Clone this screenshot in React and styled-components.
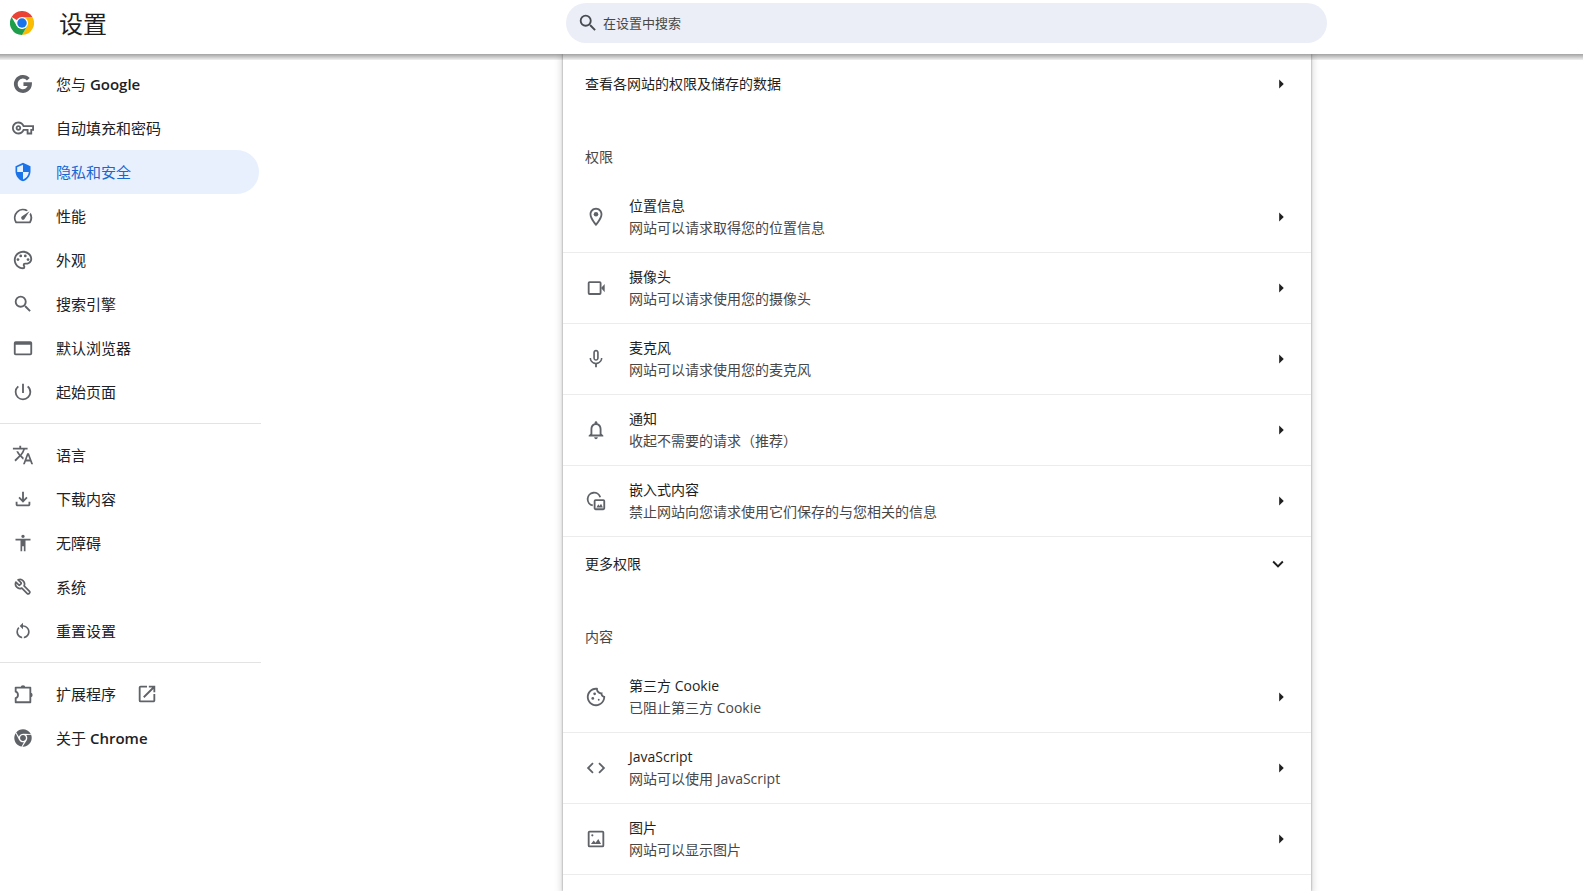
import React, { useState } from 'react';
import styled, { createGlobalStyle } from 'styled-components';
import { FaChrome } from 'react-icons/fa';
import {
    MdAccessibility,
    MdCode,
    MdNotificationsNone,
    MdOpenInNew,
    MdOutlineCookie,
    MdOutlineFileDownload,
    MdOutlineLocationOn,
    MdOutlinePalette,
    MdOutlineSpeed,
    MdOutlineVpnKey,
    MdMicNone,
    MdPowerSettingsNew,
    MdRestartAlt,
    MdSearch,
    MdSecurity,
    MdTranslate,
} from 'react-icons/md';

const ChromeLogo = () => (
    <svg width="24" height="24" viewBox="0 0 48 48" aria-hidden="true">
        <path d="M24 24 3.2 12A24 24 0 0 1 44.8 12H24z" fill="#ea4335" />
        <path d="M24 12h20.8A24 24 0 0 1 24 48l10.4-18z" fill="#fbbc04" />
        <path d="M3.2 12 13.6 30 24 36l10.4-6L24 48A24 24 0 0 1 3.2 12z" fill="#1e9e4a" />
        <circle cx="24" cy="24" r="12" fill="#fff" />
        <circle cx="24" cy="24" r="9.5" fill="#1a73e8" />
    </svg>
);

const GoogleIcon = () => (
    <svg viewBox="0 0 24 24" fill="none" stroke="currentColor" strokeWidth="4" aria-hidden="true">
        <path d="M17.800 6.800A7.800 7.800 0 1 0 19.700 12.200H12.500" />
    </svg>
);

const BrowserIcon = () => (
    <svg viewBox="0 0 24 24" fill="currentColor" aria-hidden="true">
        <path fillRule="evenodd" d="M4 4.5h16a2 2 0 0 1 2 2V18a2 2 0 0 1-2 2H4a2 2 0 0 1-2-2V6.500a2 2 0 0 1 2-2zM4 8.500V18h16V8.500z" />
    </svg>
);

const WrenchIcon = () => (
    <svg viewBox="0 0 24 24" fill="none" stroke="currentColor" strokeWidth="2.3" strokeLinejoin="round" aria-hidden="true">
        <g transform="translate(24 0) scale(-1 1)">
            <path d="M14.700 6.300a1 1 0 0 0 0 1.400l1.600 1.600a1 1 0 0 0 1.400 0l3.770-3.770a6 6 0 0 1-7.940 7.940l-6.910 6.910a2.120 2.120 0 0 1-3-3l6.910-6.910a6 6 0 0 1 7.940-7.940l-3.760 3.760z" />
        </g>
    </svg>
);

const PuzzleIcon = () => (
    <svg viewBox="0 0 24 24" fill="none" stroke="currentColor" strokeWidth="2" aria-hidden="true">
        <path d="M4 5h16v16H4v-4.500c1.500-.5 2.500-1.800 2.500-3.500S5.500 10 4 9.500z" strokeLinejoin="round" />
        <path d="M9.500 5a2.500 2.500 0 0 1 5 0zM20 10.500a2.500 2.500 0 0 1 0 5z" fill="currentColor" stroke="none" />
    </svg>
);

const CameraIcon = () => (
    <svg viewBox="0 0 24 24" fill="none" stroke="currentColor" strokeWidth="2" aria-hidden="true">
        <rect x="4" y="5.500" width="13" height="13" rx="1" />
        <path d="M17.500 12l4-4.500v9z" fill="currentColor" stroke="none" />
    </svg>
);

const EmbedIcon = () => (
    <svg viewBox="0 0 24 24" fill="none" stroke="currentColor" strokeWidth="2" aria-hidden="true">
        <path d="M8.500 16.800A7 7 0 1 1 16.600 8" />
        <rect x="10.500" y="11" width="10.500" height="10" rx="1" />
        <path d="M12.500 19l2-3.500 1.300 2 1.700-2.500 2 4z" fill="currentColor" stroke="none" />
    </svg>
);

const ImageIcon = () => (
    <svg viewBox="0 0 24 24" fill="none" stroke="currentColor" strokeWidth="2" aria-hidden="true">
        <rect x="4" y="4" width="16" height="16" rx="1" />
        <circle cx="8" cy="8" r="1.200" fill="currentColor" stroke="none" />
        <path d="M6.500 17.500l3-4 2 2.500 3-4 3 5.500z" fill="currentColor" stroke="none" />
    </svg>
);

const ArrowRight = () => (
    <svg viewBox="0 0 24 24" fill="currentColor" aria-hidden="true">
        <path d="M10 17l5-5-5-5z" />
    </svg>
);

const ChevronDown = () => (
    <svg viewBox="0 0 24 24" fill="currentColor" aria-hidden="true">
        <path d="M16.590 8.590L12 13.170 7.410 8.590 6 10l6 6 6-6z" />
    </svg>
);

const menu = [
    [
        { id: 'people', label: '您与', brand: 'Google', icon: <GoogleIcon /> },
        { id: 'autofill', label: '自动填充和密码', icon: <MdOutlineVpnKey /> },
        { id: 'privacy', label: '隐私和安全', icon: <MdSecurity />, size: 20 },
        { id: 'performance', label: '性能', icon: <MdOutlineSpeed /> },
        { id: 'appearance', label: '外观', icon: <MdOutlinePalette /> },
        { id: 'search', label: '搜索引擎', icon: <MdSearch /> },
        { id: 'browser', label: '默认浏览器', icon: <BrowserIcon /> },
        { id: 'startup', label: '起始页面', icon: <MdPowerSettingsNew /> },
    ],
    [
        { id: 'languages', label: '语言', icon: <MdTranslate /> },
        { id: 'downloads', label: '下载内容', icon: <MdOutlineFileDownload /> },
        { id: 'accessibility', label: '无障碍', icon: <MdAccessibility />, size: 20 },
        { id: 'system', label: '系统', icon: <WrenchIcon />, size: 18 },
        { id: 'reset', label: '重置设置', icon: <MdRestartAlt />, size: 20 },
    ],
    [
        { id: 'extensions', label: '扩展程序', icon: <PuzzleIcon />, external: true },
        { id: 'help', label: '关于', brand: 'Chrome', icon: <FaChrome />, size: 18 },
    ],
];

const permissions = [
    { title: '位置信息', sub: '网站可以请求取得您的位置信息', icon: <MdOutlineLocationOn /> },
    { title: '摄像头', sub: '网站可以请求使用您的摄像头', icon: <CameraIcon /> },
    { title: '麦克风', sub: '网站可以请求使用您的麦克风', icon: <MdMicNone /> },
    { title: '通知', sub: '收起不需要的请求（推荐）', icon: <MdNotificationsNone /> },
    { title: '嵌入式内容', sub: '禁止网站向您请求使用它们保存的与您相关的信息', icon: <EmbedIcon /> },
];

const contents = [
    { title: '第三方 Cookie', sub: '已阻止第三方 Cookie', icon: <MdOutlineCookie /> },
    { title: 'JavaScript', sub: '网站可以使用 JavaScript', icon: <MdCode /> },
    { title: '图片', sub: '网站可以显示图片', icon: <ImageIcon /> },
];

const SettingRow = ({ item }) => (
    <Row type="button">
        <Icon>{item.icon}</Icon>
        <RowText>
            <RowTitle>{item.title}</RowTitle>
            <RowSub>{item.sub}</RowSub>
        </RowText>
        <Arrow><ArrowRight /></Arrow>
    </Row>
);

const App = () => {
    const [selected, setSelected] = useState('privacy');

    return (
        <Page>
            <GlobalStyle />
            <Header>
                <Brand>
                    <ChromeLogo />
                    <Title>设置</Title>
                </Brand>
                <SearchArea>
                    <SearchBox>
                        <Icon><MdSearch /></Icon>
                        <SearchInput type="search" placeholder="在设置中搜索" aria-label="在设置中搜索" />
                    </SearchBox>
                </SearchArea>
            </Header>
            <Body>
                <Sidebar>
                    {menu.map((group, i) => (
                        <MenuGroup key={i}>
                            {group.map((item) => (
                                <MenuItem
                                    key={item.id}
                                    href={`#${item.id}`}
                                    $active={item.id === selected}
                                    onClick={() => setSelected(item.id)}
                                >
                                    <Icon $size={item.size}>{item.icon}</Icon>
                                    <MenuLabel>
                                        {item.label}
                                        {item.brand && <b> {item.brand}</b>}
                                    </MenuLabel>
                                    {item.external && <Icon><MdOpenInNew /></Icon>}
                                </MenuItem>
                            ))}
                        </MenuGroup>
                    ))}
                </Sidebar>
                <Main>
                    <Card>
                        <LinkRow type="button">
                            <RowText>查看各网站的权限及储存的数据</RowText>
                            <Arrow><ArrowRight /></Arrow>
                        </LinkRow>
                        <SectionTitle>权限</SectionTitle>
                        {permissions.map((item) => <SettingRow key={item.title} item={item} />)}
                        <ExpandRow type="button" aria-expanded="false">
                            <RowText>更多权限</RowText>
                            <Icon $dark><ChevronDown /></Icon>
                        </ExpandRow>
                        <SectionTitle>内容</SectionTitle>
                        {contents.map((item) => <SettingRow key={item.title} item={item} />)}
                    </Card>
                </Main>
            </Body>
        </Page>
    );
};

const GlobalStyle = createGlobalStyle`
    * {
        box-sizing: border-box;
    }
    body {
        margin: 0;
        background: #fff;
        color: #1f1f1f;
        font-family: "Open Sans", "Noto Sans CJK SC", sans-serif;
    }
    button, input {
        font-family: inherit;
    }
`;

const Page = styled.div`
    display: flex;
    flex-direction: column;
    height: 100vh;
    overflow: hidden;
`;

const Header = styled.header`
    position: relative;
    z-index: 1;
    display: flex;
    flex-shrink: 0;
    height: 54px;
    background: #fff;

    &::after {
        content: '';
        position: absolute;
        top: 100%;
        left: 0;
        right: 0;
        height: 6px;
        background: linear-gradient(rgba(0, 0, 0, 0.36), rgba(0, 0, 0, 0.06));
        pointer-events: none;
    }
`;

const Brand = styled.div`
    display: flex;
    align-items: center;
    gap: 25px;
    width: 310px;
    height: 46px;
    padding-left: 10px;
`;

const Title = styled.h1`
    margin: 0;
    padding-top: 2px;
    font-size: 24px;
    font-weight: 400;
    line-height: 32px;
`;

const SearchArea = styled.div`
    flex: 1;
    display: flex;
    justify-content: center;
    align-items: flex-start;
    padding-top: 3px;
`;

const SearchBox = styled.div`
    display: flex;
    align-items: center;
    gap: 4px;
    width: 100%;
    max-width: 761px;
    height: 40px;
    padding: 0 11px;
    border-radius: 20px;
    background: #ebeef7;
`;

const SearchInput = styled.input`
    flex: 1;
    padding: 0;
    border: none;
    outline: none;
    background: transparent;
    font-size: 13px;
    line-height: 20px;
    &::placeholder {
        color: #474747;
        opacity: 1;
    }
`;

const Body = styled.div`
    flex: 1;
    display: flex;
    min-height: 0;
`;

const Sidebar = styled.nav`
    flex-shrink: 0;
    width: 291px;
    padding-top: 8px;
`;

const MenuGroup = styled.div`
    width: 261px;
    & + & {
        margin-top: 9px;
        padding-top: 9px;
        border-top: 1px solid #e3e3e3;
    }
`;

const MenuItem = styled.a`
    display: flex;
    align-items: center;
    gap: 20px;
    height: 44px;
    margin-right: 2px;
    padding-left: 12px;
    border-radius: 0 22px 22px 0;
    font-size: 15px;
    text-decoration: none;
    color: ${(props) => (props.$active ? '#1967d2' : '#202124')};
    background: ${(props) => (props.$active ? '#e8f0fe' : 'transparent')};

    & > span {
        color: ${(props) => (props.$active ? '#1a73e8' : '#5f6368')};
    }
`;

const MenuLabel = styled.div`
    padding-left: 2px;
    line-height: 22px;
    b {
        font-weight: 600;
    }
`;

const Icon = styled.span`
    display: inline-flex;
    align-items: center;
    justify-content: center;
    flex-shrink: 0;
    width: 22px;
    height: 22px;
    color: ${(props) => (props.$dark ? '#1f1f1f' : '#474b4f')};

    svg {
        width: ${(props) => props.$size || 22}px;
        height: ${(props) => props.$size || 22}px;
    }
`;

const Main = styled.main`
    flex: 1;
    display: flex;
    justify-content: center;
    align-items: stretch;
    min-width: 0;
`;

const Card = styled.section`
    width: 100%;
    max-width: 748px;
    background: #fff;
    box-shadow: 0 0 2px rgba(0, 0, 0, 0.4), 0 2px 7px 2px rgba(0, 0, 0, 0.14);
`;

const Row = styled.button`
    display: flex;
    align-items: center;
    gap: 22px;
    width: 100%;
    height: 71px;
    padding: 0 10px 0 22px;
    border: none;
    border-bottom: 1px solid #ececec;
    background: transparent;
    color: #1f1f1f;
    font-size: 14px;
    line-height: 22px;
    text-align: left;
    cursor: pointer;

    & > span:first-child {
        color: #5f6368;
    }
`;

const LinkRow = styled(Row)`
    height: 59px;
    border-bottom: none;
    & > span:first-child {
        color: #1f1f1f;
    }
`;

const ExpandRow = styled(LinkRow)`
    height: 56px;
    padding-right: 22px;
    padding-bottom: 2px;
`;

const RowText = styled.span`
    flex: 1;
    display: flex;
    flex-direction: column;
`;

const RowTitle = styled.span`
    color: #1f1f1f;
`;

const RowSub = styled.span`
    color: #474747;
`;

const Arrow = styled.span`
    display: flex;
    justify-content: center;
    width: 40px;
    svg {
        width: 22px;
        height: 22px;
    }
`;

const SectionTitle = styled.h2`
    margin: 0;
    padding: 33px 22px 14px;
    color: #474747;
    font-size: 14px;
    font-weight: 400;
    line-height: 22px;
`;

export default App;
